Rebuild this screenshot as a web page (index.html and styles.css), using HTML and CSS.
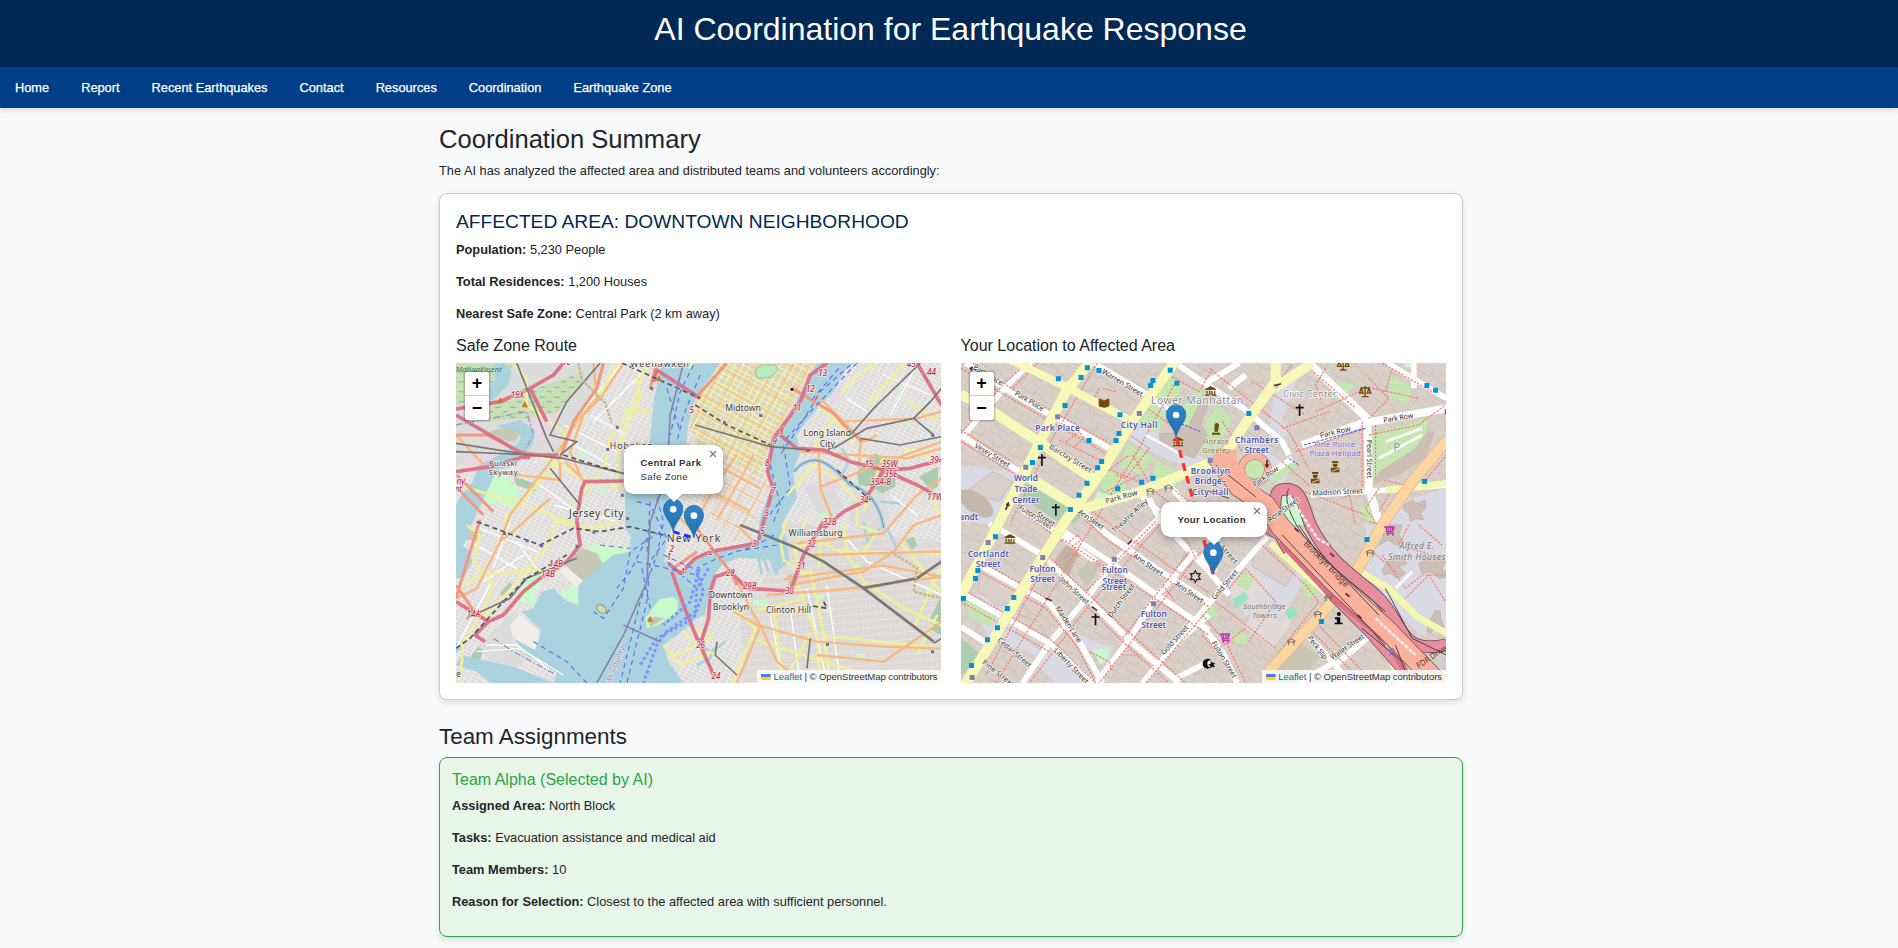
FILE: index.html
```html
<!DOCTYPE html>
<html lang="en">
<head>
<meta charset="utf-8">
<title>AI Coordination for Earthquake Response</title>
<link rel="stylesheet" href="styles.css">
</head>
<body>
<header class="site-header"><h1>AI Coordination for Earthquake Response</h1></header>
<nav class="site-nav">
<a>Home</a><a>Report</a><a>Recent Earthquakes</a><a>Contact</a><a>Resources</a><a>Coordination</a><a>Earthquake Zone</a>
</nav>
<main class="container">
<h2>Coordination Summary</h2>
<p class="lead">The AI has analyzed the affected area and distributed teams and volunteers accordingly:</p>
<section class="card">
<h4 class="area-title">AFFECTED AREA: DOWNTOWN NEIGHBORHOOD</h4>
<p><strong>Population:</strong> 5,230 People</p>
<p><strong>Total Residences:</strong> 1,200 Houses</p>
<p><strong>Nearest Safe Zone:</strong> Central Park (2 km away)</p>
<div class="maps">
<div>
<h5>Safe Zone Route</h5>
<div class="map">
<svg class="tiles" viewBox="18 24 1455 960" preserveAspectRatio="none">
<defs>
<pattern id="g1" width="17" height="11" patternUnits="userSpaceOnUse" patternTransform="rotate(28)"><rect width="17" height="11" fill="#dfdddb"/><path d="M0 0H17M0 0V11" stroke="#fff" stroke-width="2.4"/><path d="M1 11H17" stroke="#cac6c2" stroke-width=".8"/></pattern>
<pattern id="g2" width="14" height="22" patternUnits="userSpaceOnUse" patternTransform="rotate(-5)"><rect width="14" height="22" fill="#dcd9d7"/><path d="M0 0H14M0 0V22" stroke="#f7f5f3" stroke-width="2.5"/><path d="M2 0V22" stroke="#c5c0bc" stroke-width=".7"/></pattern>
<pattern id="g3" width="20" height="32" patternUnits="userSpaceOnUse" patternTransform="rotate(29)"><rect width="20" height="32" fill="#d9d5cb"/><path d="M0 0H20M0 0V32" stroke="#f4f59c" stroke-width="8"/><path d="M0 16H20" stroke="#f6f6b4" stroke-width="3"/></pattern>
<pattern id="g4" width="46" height="50" patternUnits="userSpaceOnUse" patternTransform="rotate(28)"><path d="M0 0H46M0 0V50" stroke="#fac07e" stroke-width="6"/></pattern>
<pattern id="marsh" width="44" height="30" patternUnits="userSpaceOnUse"><rect width="44" height="30" fill="#c9dfb4"/><path d="M4 7H20M26 20H40" stroke="#5ab6e8" stroke-width="3"/></pattern>
<linearGradient id="pin" x2="0" y2="1"><stop stop-color="#2e83ca"/><stop offset="1" stop-color="#2472ae"/></linearGradient>
<g id="marker"><path d="M0 98C-6 68-29 54-29 29A29 29 0 0 1 29 29C29 54 6 68 0 98Z" fill="url(#pin)" stroke="#2368a0" stroke-width="2"/><circle cy="31" r="10" fill="#fff"/></g>
</defs>
<rect x="18" y="24" width="1455" height="960" fill="url(#g1)"/>
<path d="M995 500L1473 560V984H880L870 780L960 640Z" fill="url(#g2)"/>
<g fill="#dcdcdc"><path d="M18 24H480L330 300 18 330Z"/><path d="M190 770L280 820 270 880 200 940 320 984H150L90 870Z"/><path d="M1210 410L1300 400 1320 510 1270 560 1200 500Z"/><path d="M1060 390h80l40 60-60 60z"/><path d="M1010 670l30-50 20 70z"/></g>
<path d="M18 24H190L160 90 30 150 18 150ZM110 140L230 110 400 50 390 90 300 200 270 200 210 190 110 200Z" fill="url(#marsh)"/>
<g fill="#c8facc"><path d="M95 390l60-35 60 60-20 45-60-20-20 15z"/><path d="M410 570L535 580 500 620 430 680 380 690 390 750 330 720 370 690 450 640Z"/><path d="M470 690l20-25 20 20-15 18zM210 700l60-60 10 30-30 50 20 40-70-30z"/><path d="M840 30l110-6 10 30-20 35-60 5-35-30z"/><path d="M376 440h14v14h-14zM450 400h14v16h-14zM280 440h12v14h-12zM390 285h14v20h-14zM1345 98h16v14h-16zM1130 757h18v16h-18zM1218 895h26v14h-26zM1100 718h18v14h-18zM1212 627h18v16h-18zM1425 700h14v16h-14zM910 735h44v18h-44zM1100 480l30-10 0 30z"/></g>
<g fill="#aacbaf"><path d="M190 365l65 20 0 25-55-20zM1220 350l40-45 15-10 60 30 0 70-40 20-30-20-40-5zM1405 365l58-30v60l-20 10zM1365 555l25-10 10 25-15 15zM1440 790l33-70v120l-30-15zM150 715l30-35 10 15-30 35zM65 900l20-25 15 10-10 30-30 0z"/></g>
<g fill="#e9d6e3"><path d="M240 190l90-20-25 80-40 10zM50 310l60-20 50 10-30 30-90 5zM1120 350l45-15 10 60-40 15zM1145 100l20-10 10 30-40 50zM1220 215l60-25 10 20-60 20z"/></g>
<path d="M350 620l45-40 45 15 20 35-60 50-40-15-15-20zM1010 660l30-5 5 35-30 5zM115 230l80-20 20 10-20 40-70-10z" fill="#c7c7b4"/>
<path d="M30 525l25-10 40 20-5 25-40-5z" fill="#d1c6bd"/>
<path d="M180 810l30-30 55 45 5 60-40 10-40-40zM330 650l20-15 70 60-20 20z" fill="#f2eee8"/>
<g fill="#aad3df">
<path d="M635 24H810L735 130 715 210 705 300 690 440 668 510 650 555 642 620 690 665 735 612 800 583 890 565 925 555 927 500 950 430 965 395 945 325 975 250 1020 170 1072 75 1100 24H1213L1180 50 1150 110 1100 160 1065 205 1038 240 1050 290 1028 350 1040 430 1010 480 992 510 1010 555 1017 620 980 650 967 615 870 608 820 625 795 655 775 710 765 780 740 790 700 825 640 870 655 920 700 984H310L320 955 230 900 190 850 255 885 275 825 215 770 250 760 275 710 310 700 345 735 385 752 385 690 440 640 490 600 540 590 542 545 525 520 525 420 570 350 600 250 612 130Z"/>
<path d="M160 24l25 25-10 40-45 45-40 0 45-60-5-50zM150 210l60-15 45 30-5 40-60 70-50 10-45 100-30 60-20 60-37 40V470l20-40 40-50 20-50 60-30 50-30 15-20-15-25-60-10zM18 550l40 40 10 30-30 50-20 0zM18 860l20 20-20 15zM35 900L190 935 310 984H120L80 950 18 930Z"/>
</g>
<path d="M1030 350C1100 270 1160 350 1200 390 1250 400 1290 450 1300 520" fill="none" stroke="#aad3df" stroke-width="12"/>
<path d="M1175 280l20 40-20 40M1290 440l60 5M1240 500l10 60 40-40M1310 520l30 60M735 870l50 20 40-30M740 930l40-20 10-30M925 610l10 50M940 610l15 40M960 610l20 50" fill="none" stroke="#aad3df" stroke-width="8"/>
<path d="M585 790l40-55 45-10 15 15-5 30-55 40-35 10z" fill="#c8facc"/><circle cx="652" cy="762" r="28" fill="#c8facc"/><path d="M590 790l25-5 30 5-45 25z" fill="#c7c7b4"/>
<ellipse cx="454" cy="762" rx="16" ry="11" fill="#cde0a8" stroke="#a99" stroke-width="4" transform="rotate(35 454 762)"/>
<path d="M812 24H1095L1020 160 970 250 935 325 960 400 910 520 850 560 690 640 650 600 668 510 705 300 715 210 735 140Z" fill="url(#g1)"/>
<path d="M812 24H1095L1020 160 970 250 935 325 940 370 735 260 720 220 735 140Z" fill="url(#g3)"/>
<path d="M812 24H1095L1020 160 970 250 935 325 960 400 910 520 850 560 810 510 720 400 710 260 735 140Z" fill="url(#g4)"/>
<path d="M915 45l20-15 40 0 10 15-25 22-40 3z" fill="#b8ebbd" stroke="#8fa77e" stroke-width="2"/>
<g fill="none" stroke="#fff" stroke-width="4"><path d="M340 210L500 290M320 240L480 330M310 450L500 500M270 390L380 470M420 180L530 240M370 200L520 20M430 200L590 40M60 560L200 640M90 520L260 590M180 500L130 640M200 560L260 640M100 680L220 600M18 880L120 690M80 890l130-10 130 80M110 870l90 0 120 90M960 780L1000 984M1020 760L1050 984M1070 700L1130 984M1130 690L1170 984M1180 540L1250 620 1473 720M1190 130l60 40M1300 60l140 60M1320 180l80-150M1320 420l80 60"/></g>
<g fill="none" stroke="#eff09c" stroke-width="8" stroke-linejoin="round"><path d="M500 24L440 140 340 240 330 320 250 400 160 500M590 24L540 170 480 250 460 340 370 450M560 60L570 130 510 260 500 400M520 165L600 170M270 300L400 370 520 400M18 390L200 440 380 510M190 24L230 70 230 150 340 230M50 510L90 540 70 620 130 690 100 770 40 860 30 984M230 645L300 560 320 500 420 520 500 500M20 700L90 660 240 645 330 655M100 790L230 650M640 870l50 60 90-40 30 20M700 830l40 40-80 40M1180 500l10 100 50 80 120 80 113 50M1010 495l-20 60 10 60 70 50M1065 500l-30 80 10 70 70 10M1030 590l60-40 80 40 300 5M1115 500l-10 140M1350 560l120 150M960 784L1050 760 1115 750M1040 680l60 170 10 134M1080 640l40 200 20 144M970 760l30 224M920 764l130-30M855 760l60 60-70 164M900 850l320 100 250 30M1110 840l360 40M1470 640l-80 180M1400 900l60-120M1010 420l80-90 80 50 50 60 0 70 60 20-40 60M1170 120L1210 70 1280 24M1150 190l-60 90M1250 150l110-120M1080 130l80 70 50 70M1370 140l100 60M1360 280l113 40M1300 300l-60 170M1440 420l30 60M1000 984l80-150M735 820l50 20-40 40M715 40l30-40"/></g>
<g fill="none" stroke="#fab97c" stroke-width="7" stroke-linejoin="round"><path d="M430 24L440 130 380 200 330 280 180 480 150 560 80 700 18 730M520 24L450 130 400 180 360 290 390 360 400 384M345 320L410 385M330 320L330 380M330 375L120 350 18 240M150 560L200 520 300 430M860 300L790 400 740 495M910 300L800 495M730 380L900 470M760 310L930 400M680 480L740 540M860 510L910 560M1040 565L1300 535 1400 420 1473 370M1000 672L1300 632 1473 665M950 720L1180 703 1473 665M1020 690L1240 650 1330 590 1390 510 1473 480M850 770L920 810 1100 860 1300 875 1470 880M840 640L900 760 935 820 980 920 1060 984M1080 600L1473 590M1105 290L1110 400 1150 500M1230 260L1225 340M1050 290L1370 310 1473 280M1110 395L1473 260M1170 200L1400 190 1473 170M1080 100L1240 260 1280 240M1100 900L1300 920 1473 800M930 815L860 984"/></g>
<g fill="none" stroke="#f1987e" stroke-width="9" stroke-linejoin="round"><path d="M18 240L110 240 210 290 330 310 370 200 440 100 460 24M90 495L60 590 18 730M18 690L80 780M740 520L840 650 860 690M620 24L600 100M100 480L18 395M1025 100L1150 175 1180 210M1180 210L1235 260M735 130L830 24M670 640L740 590M20 360l110 110"/></g>
<g fill="none" stroke="#dd758a" stroke-width="11" stroke-linejoin="round"><path d="M340 24L310 60 240 100 150 140 18 162M18 350L120 335 240 300 325 300M18 180L120 240 180 275 240 310M240 100L290 200M380 495L395 400 405 380 520 378M380 495L390 570 350 620 270 670 220 710 160 780 115 800 18 740M115 800L75 840 105 860M610 80L620 45 750 130M1130 24L1080 60 1050 140 970 250 952 350 968 400 940 500 925 555M925 560L890 570 780 590 735 610 690 655 655 625M665 650L700 750 740 850 760 870M840 650L795 665 780 710 775 790 750 870 790 960M840 650L890 700 1020 708 1060 600 1120 500M990 240L1040 280 1120 285 1200 320 1300 345 1380 340 1473 315M1300 345L1240 440 1180 470 1120 520M1300 345L1400 390 1473 430M1400 24L1473 150"/></g>
<g fill="none" stroke="#7a7876" stroke-width="5"><path d="M18 265L240 300 340 310 580 370M18 290L250 300M200 24L290 250 310 290M330 300L380 260 300 240 350 140 450 24M1150 280L1250 220 1390 190 1450 240M1200 240L1270 160 1410 24M1390 190L1440 140 1473 100M1230 250L1350 270 1473 245M1080 850L1070 940M800 860L795 900 860 960M1450 865L1473 850M300 340L390 450M50 790l130-60 50-60 150-60M735 210L960 275 1080 285"/><path d="M870 510L1030 575 1120 620 1240 700 1450 860M1235 700L1400 670 1473 620" stroke-width="8"/></g>
<path d="M80 500L270 570 370 520 450 530 540 515 640 540M515 24L750 130M735 150L830 210 960 270M18 880L60 850 160 740 230 670 350 600M340 300L500 350M1160 345l100 90M1120 740l10 20-60-10" fill="none" stroke="#555" stroke-width="5" stroke-dasharray="15 10"/>
<g fill="none" stroke="#5c72ec" stroke-width="3.5" stroke-dasharray="15 12"><path d="M730 30L690 110 660 240M750 60L700 180 680 260M650 100L690 230M560 440L600 450 650 550 600 620 590 740 530 984M620 430L640 500 620 600 570 740 510 984M600 440L590 600M630 530L540 590 520 700 460 790 430 770M590 550L540 650 500 700M650 620L740 700M640 600L750 650M560 620L740 660M1200 30L1110 110 1050 210 990 300M1220 24L1080 170 1000 260M1165 40L1080 140M960 330L990 450 970 500M1000 270L1020 400 950 490M970 540L920 570 800 610 740 640M980 570L850 590M250 860L350 920 410 984M450 570L540 580M575 640L600 760"/></g>
<path d="M775 640L740 700 735 770 650 830 620 870 580 984M748 640L720 740 640 810M740 650L760 710 730 790 620 850 570 930" fill="none" stroke="#8195ff" stroke-width="9" stroke-dasharray="10 7"/>
<path d="M700 24L660 180 650 360 600 500 590 680 520 840 440 984M520 810L630 860" fill="none" stroke="#8d83ad" stroke-width="5"/>
<path d="M130 850l60 40 130 70M18 210L230 170 250 240 210 310" fill="none" stroke="#a691b7" stroke-width="4" stroke-dasharray="20 7 4 7"/>
<path d="M1030 350C1100 270 1160 350 1200 390 1250 400 1290 450 1300 520" fill="none" stroke="#7f93ac" stroke-width="3"/>
<path d="M385 24l10 50 70 70 20 60M1320 590l80 50-10 70 80 20" fill="none" stroke="#c9b684" stroke-width="7" stroke-dasharray="9 4"/>
<g fill="#6b6eb0"><path d="M468 279h9v9h-9zM497 212h9v9h-9zM600 96h9v9h-9zM512 416h9v9h-9zM528 486h9v9h-9zM159 531h9v9h-9zM227 553h9v9h-9zM270 568h9v9h-9zM376 569h9v9h-9zM427 527h9v9h-9zM219 670h9v9h-9zM156 735h9v9h-9zM927 177h9v9h-9zM818 198h9v9h-9zM1133 276h9v9h-9zM1068 282h9v9h-9zM1443 237h9v9h-9zM1127 864h9v9h-9zM1442 886h9v9h-9z"/></g>
<path d="M1021 99h8v8h-8z" fill="#000"/><path d="M142 145l9-18 9 18zM215 156l9-18 9 18zM617 78l9-18 9 18zM591 800l9-17 9 17z" fill="#d0732e"/>
<g class="town"><text x="540" y="36" textLength="176">Weehawken</text><text x="479" y="281" textLength="129">Hoboken</text><text x="357" y="485" textLength="163" font-size="31">Jersey City</text><text x="118" y="332" textLength="82" font-size="22">Pulaski</text><text x="116" y="360" textLength="86" font-size="22">Skyway</text><text x="825" y="169" textLength="107">Midtown</text><text x="1060" y="242" textLength="142">Long Island</text><text x="1108" y="276" textLength="46">City</text><text x="1015" y="544" textLength="162">Williamsburg</text><text x="776" y="730" textLength="132">Downtown</text><text x="788" y="765" textLength="108">Brooklyn</text><text x="947" y="774" textLength="135">Clinton Hill</text><text x="650" y="562" textLength="160" font-size="31">New York</text><text x="19" y="967" font-size="24">e</text></g>
<g class="shield"><text x="182" y="129">15X</text><text x="337" y="31">1E</text><text x="718" y="175">5</text><text x="1104" y="63">13</text><text x="1067" y="112">12</text><text x="1027" y="167">11</text><text x="987" y="236">8</text><text x="967" y="268">9</text><text x="944" y="333">8</text><text x="963" y="418">7</text><text x="943" y="484">5</text><text x="1243" y="336">15</text><text x="1294" y="337">35W,</text><text x="1302" y="366">35E</text><text x="1260" y="390">35A-B</text><text x="1228" y="444">34</text><text x="1438" y="324">39</text><text x="1430" y="436">17W</text><text x="1430" y="59">44</text><text x="1370" y="36">45</text><text x="1118" y="511">32B</text><text x="1070" y="575">32</text><text x="1039" y="643">31</text><text x="1004" y="716">30</text><text x="827" y="662">28</text><text x="878" y="702">29B</text><text x="905" y="577">3</text><text x="776" y="600">2</text><text x="658" y="590">2</text><text x="650" y="616">1</text><text x="297" y="635">14B</text><text x="273" y="666">14B</text><text x="50" y="785">14A</text><text x="738" y="879">26</text><text x="784" y="973">24</text><text x="930" y="536">5</text><text x="692" y="660">1</text></g>
<text x="17" y="50" class="green" textLength="138">Management</text><text x="20" y="387" class="shield">ny</text><text x="14" y="412" class="shield">nt</text><text class="county" transform="translate(480 984) rotate(-67)">as County</text>
<path d="M669 530L731 549" stroke="#2432ff" stroke-width="9" stroke-dasharray="20 14" fill="none"/>
<use href="#marker" x="669" y="432"/><use href="#marker" x="731" y="451"/>
</svg>
<div class="zoom-control"><span>+</span><span>−</span></div>
<div class="popup popup-park"><b>Central Park</b><br>Safe Zone<svg class="close" viewBox="0 0 8 8"><path d="M1 1L7 7M7 1L1 7"/></svg></div>
<div class="attribution"><svg class="flag" viewBox="0 0 12 8"><path fill="#4c7be1" d="M0 0h12v4H0z"/><path fill="#ffd500" d="M0 4h12v3H0z"/><path fill="#e0bc00" d="M0 7h12v1H0z"/></svg> <a>Leaflet</a> | © OpenStreetMap contributors</div>
</div>
</div>
<div>
<h5>Your Location to Affected Area</h5>
<div class="map">
<svg class="tiles" viewBox="15 24 1458 960" preserveAspectRatio="none">
<defs>
<pattern id="b" width="71" height="47" patternUnits="userSpaceOnUse" patternTransform="rotate(31)"><rect width="71" height="47" fill="#d9d0c9"/><path d="M0 0H71M0 0V28H22V47M22 28H48V0M48 20H71" stroke="#c3b5aa" stroke-width="1.5" fill="none"/></pattern>
<pattern id="tree" width="14" height="12" patternUnits="userSpaceOnUse"><rect width="14" height="12" fill="#c9e8b5"/><circle cx="4" cy="4" r="2" fill="#a9d396"/><circle cx="11" cy="9" r="1.7" fill="#a9d396"/></pattern>
<g id="cross"><path d="M0-17V18M-12-7H12" stroke="#111" stroke-width="5"/></g>
<g id="cart" fill="none" stroke="#b33bb3" stroke-width="4"><path d="M-16-9L-11-9-7 10H14M-10-9H13L10 5H-7M-4-8V4M3-8V4M9-8V4"/><circle cx="-5" cy="15" r="1"/><circle cx="10" cy="15" r="1"/></g>
<g id="museum" fill="#734a08"><path d="M0-15L16-6V-3H-16V-6ZM-13 0H-9V8H-13ZM-5 0H-1V8H-5ZM2 0H6V8H2ZM10 0H14V8H10ZM-16 10H16V14H-16Z"/></g>
<g id="scales" fill="none" stroke="#734a08" stroke-width="4"><path d="M0-17V14M-10 15H10M-14-11H14M-12-10L-17 4H-6ZM12-10L6 4H17Z"/></g>
<g id="police" fill="#734a08"><path d="M-10-16H10L8-9H-8ZM-7-7H7V-2L3 3H-3L-7-2ZM-13 4H13V18H-13Z"/><path d="M-10 15L12 7" stroke="#d9d0c9" stroke-width="3"/></g>
<g id="gate" fill="none" stroke="#776d68" stroke-width="3"><path d="M-13-4L0-10 13-4M-8-4V9M8-4V9M-12-1H12"/></g>
</defs>
<rect x="15" y="24" width="1458" height="960" fill="url(#b)"/>
<g fill="#dadae5"><path d="M15 330L170 350 230 300 210 390 130 510 15 500ZM540 170L600 220 780 330 720 350 540 270 510 250ZM960 60L1030 60 980 190 1000 240 940 260ZM20 710L130 730 290 860 260 910 100 850ZM290 860L430 984H300L240 930ZM870 630L990 560 1060 650 980 790 870 780 800 690ZM1235 495H1473V830L1390 840 1220 650ZM1220 510L1340 440 1473 400V510ZM370 840L470 880 460 930 380 870ZM890 260L1010 340 980 390 900 350Z"/></g>
<path d="M30 410L110 350 170 380 130 440zM190 780l60 20 30 60-20 30-80-60zM75 650l60-35 90 60-40 60-60 20-60-50zM900 570l60-45 80 90-50 80-100-60z" fill="#d9d0c9" stroke="#c3b5aa" stroke-width="2"/>
<path d="M900 740l70 60 50-40-20 60-50 60-80-60zM825 640l60-10 60 60-30 70-80-20z" fill="#e2dad8"/>
<g fill="url(#tree)" stroke="#bed9ac" stroke-width="2"><path d="M640 65L684 90 605 234 545 205ZM672 160L740 90 735 230 690 220ZM515 265L595 305 555 360 490 335ZM600 310L690 370 650 400 590 380ZM450 345L500 355 520 420 450 415 430 390ZM735 240L790 200 800 290 740 300ZM750 200L790 145 830 200 800 250 750 240ZM1250 235L1420 190 1400 300 1280 385 1230 350ZM1300 60L1370 95 1360 150 1300 130ZM940 360l60-50 25 25-70 50zM1120 110l40-30 40 10-50 50zM1035 680l30-10 20 45-30 20zM1110 720l20-10 15 30-30 15zM860 650l35 15-20 40-35-20zM740 770l30-20 20 30-30 20zM840 830l40 10-10 30-35-5zM1210 460l30-10 40 50-40 10zM30 740l40-10 50 60-20 20-60-20zM855 340a40 35 0 1 0 80-5 40 35 0 0 0-80 5z"/></g>
<path d="M205 385L380 480 355 505 300 495 200 430Z" fill="#abd0b1"/><path d="M15 850l60 50-20 40-40 20z" fill="#abd0b1"/>
<path d="M425 410l40 10 10 20-40 15-20-20zM960 400l50 40 40 70-40 0-60-80zM1345 24l30-5 0 18-25 0zM410 885l50-5-5 30-20 20z" fill="#c8facc"/>
<path d="M830 735l35-25 15 20-35 30zM990 765l25-10 10 20-25 20z" fill="#94e3c1"/>
<path d="M365 655l40-45 30 20-40 65zM690 580l35 10-20 50-30-20zM935 944l80-90 80 50-70 80h-90z" fill="#c7c7b4"/>
<ellipse cx="60" cy="445" rx="60" ry="30" transform="rotate(35 60 445)" fill="#c4b7ac"/>
<path d="M280 640l50-70 40 20-30 70z" fill="#c4b2a4"/>
<g fill="#cdbfb5" stroke="#b8aaa0" stroke-width="2"><path d="M1350 955l30-20 15-45 20 10-10 20 40 10-15 25-20-15-15 15zM1280 645l20-30 40-10 15 20-25 10 20 20-25 15-20-15-20 5zM1280 510h60l-10 30 15 20-25 10-20-15-30 15 15-25zM1390 625l45-20 35 15-10 20 20 25-30 5-25-20-25 5zM1425 795l15-30 15 5 0 20 10 25-25 0-15 20-10-5 5-25zM1345 450l25-15 15 10 25-10 0 25-15 15 10 20-25-5-15 10-5-25-15-10zM700 210l35-70 20 10-20 60 20 30-40 70-100-40-5-35 40 0z"/></g>
<g fill="none" stroke="#fff" stroke-width="17" stroke-linejoin="round"><path d="M30 24L170 115 470 285M390 10L560 110 660 180M15 240L100 295 200 355M235 10L150 95 15 250M640 10L740 80 870 165 980 260 1000 300M200 465L300 530 420 620M350 440L450 535 600 640 760 740M300 515L470 625 610 725 760 825M100 505L260 600 400 735 520 855 670 984M70 630L280 745 370 860 440 984M640 460L470 625 400 720 280 865 200 984M580 430L620 510M720 590L600 725 520 855 420 984M760 780L660 865 560 984M15 715L160 795 290 870 410 984M15 815L100 870M660 545L760 650 820 720M1040 270L1220 205 1473 160M1065 420L1300 405 1473 390M1295 24L1473 130M1375 10V100M1010 310L900 385M935 545L850 640 735 775 690 830M735 805L800 890 845 984M1050 835L1140 930M1140 930L1240 845M1030 984L1140 920M1140 930L1180 984M1000 410L1100 560 1140 600M640 390L720 480 735 520M735 600L780 650M550 415L610 470M660 970L760 920M750 85L850 24M820 100L870 60"/><path d="M1060 24L1235 190M1235 180L1240 400 1280 530M1040 270L1220 205 1473 160" stroke-width="24"/></g>
<g fill="none" stroke="#fb7b76" stroke-width="3.6" stroke-dasharray="7 4"><path d="M15 40L155 125 450 295M50 24L175 105 480 275M15 225L160 315M15 260L190 365M215 24L140 90 15 235M245 24L170 100M380 24L250 245 130 485M425 24L290 250 165 500M660 80L550 280 330 640 120 984M630 40L500 230 310 550 90 960M200 470L320 560M60 610L280 735M80 655L270 760 360 870 420 984M15 700L280 850 420 984M15 740L280 890M360 470L460 560 760 755M380 450L760 715M300 540L610 740 760 840M260 590L540 850 690 984M390 750L500 860 640 984M620 500L400 750 220 984M600 500L390 710M735 590L430 984M700 590L500 850M760 760L570 984M340 560l25-20 10 15-25 20 20 30-30-10-20 20M600 410L760 540M650 400L760 490M310 255L430 315M330 260l40-30 15 20-30 25M520 240l60 40-70 90-30-10M530 300L590 400M450 340l150 60M440 360l80-60M550 360l-100 50M640 60L730 110 770 40M560 150L660 220M760 40L1000 230 1060 340M800 200l60 90M890 80L1050 180M950 100l60-70M1050 30L1200 160M1080 170l130-60M980 220l140-50M1020 290L1230 220M1240 240l150-30 80-60M1220 200V400L1160 430M1260 210V370L1390 400 1473 300M1050 410L1230 480M980 320L1060 390M1280 24L1430 110M1110 40l-30 50 20 50M1240 70l60 60-60 60M1250 100l140 30M1310 40l-20 70M920 570L1050 690 1090 740 940 930M820 700L870 640 960 740 880 860M780 740L960 880M740 780l70 80 60 124M740 840l80 100M870 820l-80 60M1050 810L1200 960M1070 790L1240 970M1280 600L1350 700 1400 660 1470 660M1240 580L1320 650M1360 510l-30 60 130 40M1390 510l70 60M1340 740l80-80 50 80M1240 500l80 20M1180 410l20 100M1270 400l-40 60 50 70M1300 420l-30 50M500 900h60M400 890l60 30 10 30M620 690l40 50M410 620l50 30M690 550l30 60M430 100l-20 40M480 110l-40-10"/></g>
<g fill="none" stroke="#d5d69c" stroke-width="33" stroke-linejoin="round"><path d="M665 10L540 185 430 360 330 495 220 670 120 840 20 1000M410 10L330 110 250 265 200 365 150 460 100 560 15 720"/></g>
<g fill="none" stroke="#f6f9b8" stroke-width="30" stroke-linejoin="round"><path d="M665 10L540 185 430 360 330 495 220 670 120 840 20 1000M410 10L330 110 250 265 200 365 150 460 100 560 15 720"/><path d="M155 10L330 95 540 205" stroke-width="24"/><path d="M15 118L110 170 250 262 430 385M215 365L370 460M370 465L560 408 735 335 800 310 880 190 960 80 960 10M955 100L1070 24"/></g>
<path d="M945 565L1135 735 1215 805 1300 900 1340 984M1205 645L1300 700 1385 785 1473 835M1290 405L1473 385" fill="none" stroke="#f3f8b1" stroke-width="20"/>
<path d="M1480 250L1370 380 1280 510 1205 645 1135 735 930 960" fill="none" stroke="#dfb283" stroke-width="34"/><path d="M1480 250L1370 380 1280 510 1205 645 1135 735 930 960" fill="none" stroke="#fcd5a0" stroke-width="30"/>
<g fill="none" stroke="#64444d" stroke-width="38" stroke-linejoin="round"><path d="M1000 585C965 540 940 420 975 405C1040 390 1040 450 1065 510C1120 620 1190 660 1260 720C1350 800 1320 900 1473 870"/><path d="M935 525L990 555 1135 730 1235 830 1350 960" stroke-width="24"/></g>
<g fill="none" stroke="#e78e9e" stroke-width="33" stroke-linejoin="round"><path d="M1000 585C965 540 940 420 975 405C1040 390 1040 450 1065 510C1120 620 1190 660 1260 720C1350 800 1320 900 1473 870"/><path d="M935 525L990 555 1135 730 1235 830 1350 960" stroke-width="20"/></g>
<path d="M975 560L1135 730 1300 860 1350 950" fill="none" stroke="#dc6f88" stroke-width="20"/>
<path d="M780 300L850 395 930 450 975 515 1135 680 1295 825 1473 1010" fill="none" stroke="#70534d" stroke-width="62"/>
<path d="M780 300L850 395 930 450 975 515 1135 680 1295 825 1473 1010" fill="none" stroke="#fab29d" stroke-width="58"/>
<circle cx="897" cy="343" r="40" fill="none" stroke="#99796f" stroke-width="22"/><circle cx="897" cy="343" r="40" fill="none" stroke="#fab29d" stroke-width="19"/><path d="M828 285L832 330 890 400 940 440" fill="none" stroke="#fab29d" stroke-width="26"/>
<path d="M780 330L900 425M1000 400C980 430 1010 500 1050 550L1270 780M1030 510L1090 600 1290 770M980 540L1290 870M1220 820L1340 920M1320 870L1350 950M1290 700L1370 850 1473 900M735 400L820 430" fill="none" stroke="#51434a" stroke-width="3"/>
<path d="M1000 420L1085 550 1120 570M1260 790L1380 900" fill="none" stroke="#eee" stroke-width="8" stroke-dasharray="13 4"/>
<path d="M1445 984L1473 920V945Z" fill="#aad3df"/>
<g fill="none" stroke="#4552ff" stroke-width="3" stroke-dasharray="9 4"><path d="M1045 270L1230 220M620 155L660 200 735 230M960 100l20-20M1000 310l30 20"/></g>
<path d="M1290 260L1400 220M1270 310L1400 240M1320 700l50-50M570 240l110 60" stroke="#f8f8f8" stroke-width="9" fill="none"/>
<path d="M1250 390l20-40 110-70 35-50 25 0-30 80-80 50z" fill="#cdbfb5"/>
<g fill="#0092da"><path d="M387 31h15v15h-15zM422 39h15v15h-15zM368 60h15v15h-15zM300 64h15v15h-15zM320 144h15v15h-15zM636 38h15v15h-15zM584 69h15v15h-15zM577 84h15v15h-15zM656 77h15v15h-15zM485 172h15v15h-15zM392 249h15v15h-15zM482 228h15v15h-15zM473 249h15v15h-15zM246 270h15v15h-15zM222 315h15v15h-15zM430 312h15v15h-15zM418 331h15v15h-15zM386 377h15v15h-15zM362 413h15v15h-15zM336 456h15v15h-15zM478 394h15v15h-15zM550 374h15v15h-15zM584 362h15v15h-15zM872 168h15v15h-15zM1407 84h15v15h-15zM1433 98h15v15h-15zM1400 372h15v15h-15zM1468 163h15v15h-15zM111 538h15v15h-15zM58 639h15v15h-15zM51 663h15v15h-15zM15 723h15v15h-15zM166 720h15v15h-15zM147 753h15v15h-15zM117 811h15v15h-15zM87 847h15v15h-15zM39 924h15v15h-15zM1227 546h15v15h-15zM1090 792h15v15h-15z"/></g>
<g fill="#7981b5"><path d="M298 178h15v15h-15zM543 168h15v15h-15zM202 329h15v15h-15zM896 211h15v15h-15zM756 308h15v15h-15zM89 555h15v15h-15zM253 600h15v15h-15zM468 605h15v15h-15zM586 739h15v15h-15zM41 960h15v15h-15z"/></g>
<use href="#cross" x="258" y="315"/><use href="#cross" x="300" y="464"/><use href="#cross" x="1032" y="165"/><use href="#cross" x="419" y="793"/>
<use href="#museum" x="765" y="108"/><use href="#museum" x="162" y="552"/><use href="#museum" x="667" y="260"/>
<use href="#scales" x="1229" y="110"/><use href="#scales" x="1163" y="30"/><use href="#police" x="1139" y="334"/><use href="#police" x="1079" y="367"/>
<use href="#cart" x="1302" y="525"/><use href="#cart" x="808" y="846"/><use href="#gate" x="584" y="410"/><use href="#gate" x="638" y="400"/><use href="#gate" x="1244" y="595"/><use href="#gate" x="1119" y="729"/><use href="#gate" x="1087" y="779"/><use href="#gate" x="1007" y="862"/>
<path d="M430 132l13 5 0 20-13-4zM459 132l-13 5 0 20 13-4z" fill="#734a08" stroke="#734a08" stroke-width="3"/><path d="M776 230h11l3-22-8-5-5 5zM769 233h24v6h-24z" fill="#734a08"/>
<path d="M719 647l4.500 9h10l-5 8 5 9h-10l-4.500 9-5-9h-10l5-9-5-8h10z" fill="none" stroke="#222" stroke-width="3.500"/>
<path d="M766 915a15 15 0 1 0 0 22 11 11 0 1 1 0-22zM767 918l4 6 8-1-5 6 4 8-8-2-6 5 0-8-7-3 8-3z" fill="#111"/>
<circle cx="1150" cy="777" r="6"/><path d="M1139 787h15v16h7v5h-24v-5h7v-10h-7z"/>
<path d="M45 40l18 6M50 36l-7 4 5 7M149 465l8-20M151 450l6-5 2 9M955 92l20-5M268 730l20 7M408 755l16 12M516 568l12-12M934 315v20M929 328l5 8 5-8M1017 520l12 10M1124 595l12 10M1170 715l12 10M1206 780l12 10" fill="none" stroke="#5b2838" stroke-width="5"/>
<g class="street"><text transform="translate(50 40) rotate(31)" textLength="100">Park Place</text><text transform="translate(175 119) rotate(31)" textLength="97">Park Place</text><text transform="translate(437 54) rotate(31)" textLength="139">Warren Street</text><text transform="translate(54 276) rotate(31)" textLength="120">Vesey Street</text><text transform="translate(278 279) rotate(31)" textLength="145">Barclay Street</text><text transform="translate(451 446) rotate(-16)" textLength="99">Park Row</text><text transform="translate(187 461) rotate(33)" textLength="115">Fulton Street</text><text transform="translate(365 475) rotate(34)" textLength="88">Ann Street</text><text transform="translate(477 535) rotate(-43)" textLength="137">Theatre Alley</text><text transform="translate(530 607) rotate(34)" textLength="103">Ann Street</text><text transform="translate(656 691) rotate(34)" textLength="98">Ann Street</text><text transform="translate(310 676) rotate(42)" textLength="110">John Street</text><text transform="translate(466 789) rotate(-53)" textLength="120">Dutch Street</text><text transform="translate(298 760) rotate(57)" textLength="125">Maiden Lane</text><text transform="translate(123 858) rotate(40)" textLength="125">Cedar Street</text><text transform="translate(77 925) rotate(38)" textLength="115">Pine Street</text><text transform="translate(293 888) rotate(46)" textLength="138">Liberty Street</text><text transform="translate(625 901) rotate(-48)" textLength="111">Gold Street</text><text transform="translate(1095 249) rotate(-13)" textLength="94">Park Row</text><text transform="translate(1285 203) rotate(-9)" textLength="91">Park Row</text><text transform="translate(898 397) rotate(-36)" textLength="89">Park Row</text><text transform="translate(1233 254) rotate(90)" textLength="116">Pearl Street</text><text transform="translate(1071 422) rotate(-3)" textLength="151">Madison Street</text><text transform="translate(943 503) rotate(-36)" textLength="110">Rose Street</text><text transform="translate(771 555) rotate(48)" textLength="98">ee Street</text><text transform="translate(778 736) rotate(-50)" textLength="110">Gold Street</text><text class="bridge" transform="translate(1043 567) rotate(46)" textLength="182">Brooklyn Bridge</text><text transform="translate(1055 849) rotate(53)" textLength="83">Peck Slip</text><text transform="translate(1130 914) rotate(-34)" textLength="118">Water Street</text><text transform="translate(767 864) rotate(59)" textLength="125">Fulton Street</text><text class="bridge" transform="translate(1390 941) rotate(-34)" textLength="105">FDR Drive</text><text transform="translate(240 482) rotate(32)">Street</text></g>
<g class="station"><text x="305" y="227" textLength="134">Park Place</text><text x="550" y="219" textLength="110">City Hall</text><text x="210" y="379">World</text><text x="210" y="411">Trade</text><text x="210" y="443">Center</text><text x="38" y="494">andt</text><text x="903" y="263" textLength="130">Chambers</text><text x="903" y="294">Street</text><text x="764" y="357" textLength="118">Brooklyn</text><text x="764" y="388" textLength="94">Bridge–</text><text x="764" y="419" textLength="110">City Hall</text><text x="97" y="606" textLength="124">Cortlandt</text><text x="97" y="637">Street</text><text x="260" y="650">Fulton</text><text x="260" y="681">Street</text><text x="477" y="654">Fulton</text><text x="477" y="686">Street</text><text x="474" y="706">Street</text><text x="594" y="787">Fulton</text><text x="594" y="818">Street</text></g>
<g class="district"><text x="586" y="146" textLength="277" font-size="31">Lower Manhattan</text><text x="983" y="127" textLength="160" font-size="27">Civic Center</text></g>
<g class="place"><text x="1332" y="581" textLength="104">Alfred E.</text><text x="1298" y="615" textLength="172">Smith Houses</text><text x="862" y="761" textLength="128" font-size="23">Southbridge</text><text x="890" y="789" textLength="74" font-size="23">Towers</text></g>
<g class="helipad"><text x="1077" y="276" textLength="122">One Police</text><text x="1062" y="304" textLength="154">Plaza Helipad</text></g>
<g class="statue"><text x="742" y="266" textLength="78">Horace</text><text x="740" y="294" textLength="83">Greeley</text></g>
<text x="1313" y="288" font-size="35" fill="#78a8cc">P</text><text x="1298" y="903" font-size="32" fill="#6688bf">P</text>
<path d="M661 247L773 660" fill="none" stroke="#f33" stroke-width="10" stroke-dasharray="24 16"/>
<use href="#marker" x="661" y="149"/><use href="#marker" x="773" y="562"/>
</svg>
<div class="zoom-control"><span>+</span><span>−</span></div>
<div class="popup popup-you"><b>Your Location</b><svg class="close" viewBox="0 0 8 8"><path d="M1 1L7 7M7 1L1 7"/></svg></div>
<div class="attribution"><svg class="flag" viewBox="0 0 12 8"><path fill="#4c7be1" d="M0 0h12v4H0z"/><path fill="#ffd500" d="M0 4h12v3H0z"/><path fill="#e0bc00" d="M0 7h12v1H0z"/></svg> <a>Leaflet</a> | © OpenStreetMap contributors</div>
</div>
</div>
</div>
</section>
<h3>Team Assignments</h3>
<section class="team">
<h5>Team Alpha (Selected by AI)</h5>
<p><strong>Assigned Area:</strong> North Block</p>
<p><strong>Tasks:</strong> Evacuation assistance and medical aid</p>
<p><strong>Team Members:</strong> 10</p>
<p><strong>Reason for Selection:</strong> Closest to the affected area with sufficient personnel.</p>
</section>
</main>
</body>
</html>
```
FILE: styles.css
```css
* { box-sizing: border-box; }
html { overflow: hidden; }
body { margin: 0; background: #f8f9fa; color: #212529; font: 12.8px/1.5 "Liberation Sans", Arial, sans-serif; height: 948px; overflow: hidden; }
h1, h2, h3, h4, h5, p { margin: 0; font-weight: 400; line-height: 1.2; }
.site-header { height: 67px; padding: 9.6px 0 0 3px; background: #002855; color: #fff; text-align: center; }
h1 { font-size: 32px; }
.site-nav { position: relative; height: 41px; display: flex; align-items: center; gap: 32px; padding: 0 15px; background: #003f88; color: #fff; font-weight: 500; box-shadow: 0 3px 5px rgba(0,0,0,.1); -webkit-text-stroke: .25px #fff; }
.container { width: 1024px; margin: 0 0 0 439px; padding-top: 16px; }
h2 { font-size: 25.6px; margin: 0 0 6.4px; }
p { line-height: 19.2px; margin-bottom: 12.8px; }
.card { height: 507px; padding: 16px; background: #fff; border: 1px solid #c8cacc; border-radius: 8px; box-shadow: 0 3px 6px rgba(0,0,0,.1); }
h4 { font-size: 19.2px; margin-bottom: 6.4px; color: #002855; }
h5 { font-size: 16px; margin-bottom: 6.4px; }
.maps { display: grid; grid-template-columns: 1fr 1fr; gap: 19.2px; }
.maps h5 { margin-bottom: 8.2px; }
.map { position: relative; height: 320px; overflow: hidden; background: #ddd; }
.tiles { display: block; width: 100%; height: 100%; font-family: "Noto Sans", sans-serif; }
.tiles text { paint-order: stroke; }
.town { font-size: 26px; fill: #3c3c3c; stroke: #f4f1ed; stroke-width: 4px; }
.shield { font-size: 24px; font-style: italic; font-weight: 500; fill: #b83250; stroke: #f5e8e8; stroke-width: 4px; }
.green { font-size: 23px; font-style: italic; fill: #38846a; }
.county { font-size: 25px; fill: #8d83ad; stroke: #e5eaf1; stroke-width: 4px; }
.street { font-size: 22px; fill: #333; stroke: #f7f7f5; stroke-width: 4px; }
.bridge { font-size: 24px; fill: #5a2f2f; stroke: none; }
.station { font-size: 25px; font-weight: 600; text-anchor: middle; fill: #4c58b0; stroke: #f5f3f3; stroke-width: 4px; }
.district { fill: #8a8787; stroke: #fff; stroke-width: 4px; }
.place { font-size: 26px; font-style: italic; fill: #777; stroke: #e8e6e7; stroke-width: 3px; }
.helipad { font-size: 23px; fill: #8461c4; stroke: #eee8ee; stroke-width: 3px; }
.statue { font-size: 22px; fill: #966b46; stroke: #eee8e0; stroke-width: 3px; }
.zoom-control { position: absolute; left: 9px; top: 9px; width: 24px; height: 48px; display: grid; grid-template-rows: 24px 24px; background: #fff; border-radius: 2px; box-shadow: 0 0 0 1.5px rgba(0,0,0,.2); }
.zoom-control span { display: grid; place-items: center; font-size: 18px; font-weight: 700; line-height: 1; color: #000; }
.zoom-control span:first-child { border-bottom: 1px solid #ccc; }
.popup { position: absolute; background: #fff; border-radius: 9.6px; box-shadow: 0 2px 9px rgba(0,0,0,.35); font-size: 9.6px; line-height: 14px; letter-spacing: .36px; color: #333; }
.popup::after { content: ""; position: absolute; left: 50%; top: 100%; margin-left: -8px; border: 8px solid transparent; border-top-color: #fff; border-bottom: 0; }
.popup-park { left: 168px; top: 82px; width: 99px; height: 49px; padding: 11px 0 0 16.5px; }
.popup-you { left: 200px; top: 139px; width: 106px; height: 35px; padding: 11px 0 0 17px; }
.close { position: absolute; right: 6px; top: 5px; width: 8px; height: 8px; fill: none; stroke: #757575; stroke-width: 1.1px; }
.attribution { position: absolute; right: 0; bottom: 0; height: 13px; padding: 0 4px; background: rgba(255,255,255,.8); font-size: 9.6px; line-height: 13px; letter-spacing: -.08px; white-space: nowrap; color: #333; }
.attribution a { color: #0078a8; }
.flag { width: 9.6px; height: 6.4px; }
h3 { font-size: 22.4px; margin: 24px 0 6.4px; }
.team { height: 180px; padding: 11.6px 12px; border: 1px solid #28a745; border-radius: 8px; background: #e8f5e9; box-shadow: 0 3px 6px rgba(0,0,0,.1); }
.team h5 { color: #28a745; }
```
